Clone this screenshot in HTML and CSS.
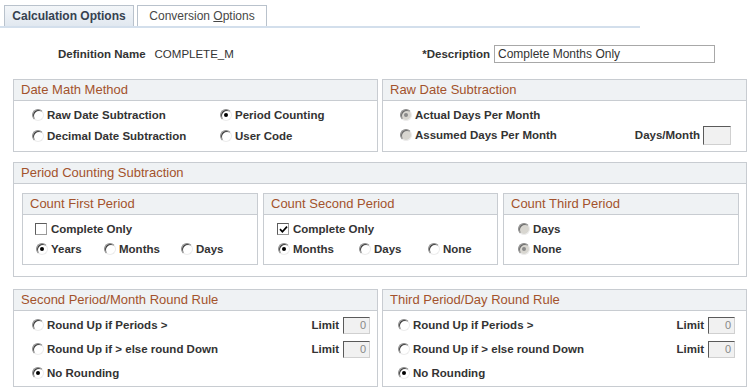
FILE: index.html
```html
<!DOCTYPE html>
<html>
<head>
<meta charset="utf-8">
<link rel="stylesheet" href="styles.css">
</head>
<body>
<div class="tabs">
  <div class="tab active"><span>Calculation Options</span></div>
  <div class="tab"><span>Conversion <u>O</u>ptions</span></div>
</div>

<div class="head-row">
  <span class="lbl">Definition Name</span>
  <span class="val">COMPLETE_M</span>
  <span class="lbl desc-lbl">*Description</span>
  <span class="desc-input">Complete Months Only</span>
</div>

<div class="pair row1">
  <div class="group">
    <div class="ghead">Date Math Method</div>
    <div class="gbody dm">
      <div class="opt"><span class="radio"></span>Raw Date Subtraction</div>
      <div class="opt"><span class="radio on"></span>Period Counting</div>
      <div class="opt"><span class="radio"></span>Decimal Date Subtraction</div>
      <div class="opt"><span class="radio"></span>User Code</div>
    </div>
  </div>
  <div class="group">
    <div class="ghead">Raw Date Subtraction</div>
    <div class="gbody rd">
      <div class="opt"><span class="radio dis on"></span>Actual Days Per Month</div>
      <div class="rd-row">
        <div class="opt"><span class="radio dis"></span>Assumed Days Per Month</div>
        <div class="opt"><span class="lbl">Days/Month</span><span class="num dm-input"></span></div>
      </div>
    </div>
  </div>
</div>

<div class="group pcs">
  <div class="ghead">Period Counting Subtraction</div>
  <div class="pcs-body">
    <div class="group inner">
      <div class="ghead">Count First Period</div>
      <div class="gbody ib ib1">
        <div class="opt"><span class="check"></span>Complete Only</div>
        <div class="line">
          <div class="opt w68"><span class="radio on"></span>Years</div>
          <div class="opt w77"><span class="radio"></span>Months</div>
          <div class="opt"><span class="radio"></span>Days</div>
        </div>
      </div>
    </div>
    <div class="group inner">
      <div class="ghead">Count Second Period</div>
      <div class="gbody ib ib2">
        <div class="opt"><span class="check on"><svg width="9" height="9" viewBox="0 0 9 9"><path d="M1 4.2 L3.4 6.8 L8 1.6" fill="none" stroke="#000" stroke-width="1.7"/></svg></span>Complete Only</div>
        <div class="line">
          <div class="opt w81"><span class="radio on"></span>Months</div>
          <div class="opt w69"><span class="radio"></span>Days</div>
          <div class="opt"><span class="radio"></span>None</div>
        </div>
      </div>
    </div>
    <div class="group inner">
      <div class="ghead">Count Third Period</div>
      <div class="gbody ib ib3">
        <div class="opt"><span class="radio dis"></span>Days</div>
        <div class="opt"><span class="radio dis on"></span>None</div>
      </div>
    </div>
  </div>
</div>

<div class="pair row3">
  <div class="group">
    <div class="ghead">Second Period/Month Round Rule</div>
    <div class="gbody rr rr1">
      <div class="rr-row"><div class="opt"><span class="radio"></span>Round Up if Periods &gt;</div><div class="opt"><span class="lbl">Limit</span><span class="num lim">0</span></div></div>
      <div class="rr-row"><div class="opt"><span class="radio"></span>Round Up if &gt; else round Down</div><div class="opt"><span class="lbl">Limit</span><span class="num lim">0</span></div></div>
      <div class="rr-row"><div class="opt"><span class="radio on"></span>No Rounding</div></div>
    </div>
  </div>
  <div class="group">
    <div class="ghead">Third Period/Day Round Rule</div>
    <div class="gbody rr rr2">
      <div class="rr-row"><div class="opt"><span class="radio"></span>Round Up if Periods &gt;</div><div class="opt"><span class="lbl">Limit</span><span class="num lim">0</span></div></div>
      <div class="rr-row"><div class="opt"><span class="radio"></span>Round Up if &gt; else round Down</div><div class="opt"><span class="lbl">Limit</span><span class="num lim">0</span></div></div>
      <div class="rr-row"><div class="opt"><span class="radio on"></span>No Rounding</div></div>
    </div>
  </div>
</div>
</body>
</html>
```
FILE: styles.css
```css
* { box-sizing: border-box; }
body {
  margin: 0;
  background: #fff;
  font-family: "Liberation Sans", Arial, sans-serif;
  color: #333;
  font-size: 11px;
}
.tabs {
  display: flex;
  gap: 3px;
  padding: 5px 0 0 4px;
  width: 640px;
  border-bottom: 2px solid #d3dfec;
}
.tab {
  width: 130px;
  height: 21px;
  border: 1px solid #b9c2cc;
  border-bottom: none;
  display: flex;
  align-items: center;
  justify-content: center;
  font-size: 12px;
  color: #474747;
  background: #fff;
}
.tab.active {
  background: linear-gradient(#f3f6f9, #e1e8f0);
  font-weight: bold;
  color: #36414f;
  font-size: 12px;
}
.head-row {
  display: flex;
  align-items: center;
  margin-top: 17px;
  padding: 0 39px 0 58px;
  height: 18px;
}
.lbl { font-weight: bold; font-size: 11.5px; color: #333; }
.val { margin-left: 9px; font-size: 11.5px; color: #333; }
.desc-lbl { margin-left: auto; }
.desc-input {
  margin-left: 4px;
  width: 221px;
  height: 18px;
  border: 1px solid #a8a8a8;
  font-size: 12px;
  color: #333;
  padding: 1px 0 0 3px;
  line-height: 15px;
}
.pair {
  display: grid;
  grid-template-columns: 365px 365px;
  gap: 4px;
  margin-left: 13px;
}
.row1 { margin-top: 16px; }
.group {
  border: 1px solid #c8ccd1;
  background: #fff;
}
.ghead {
  height: 21px;
  background: #eff2f4;
  border-bottom: 1px solid #c8ccd1;
  color: #a3522c;
  font-size: 13px;
  line-height: 20px;
  padding-left: 7px;
}
.opt {
  display: flex;
  align-items: center;
  height: 20px;
  font-weight: bold;
  font-size: 11.5px;
  white-space: nowrap;
}
.radio {
  position: relative;
  width: 12px;
  height: 12px;
  border-radius: 50%;
  background: #fff;
  border: 1px solid;
  border-color: #8d8d8d #ececec #ececec #8d8d8d;
  box-shadow: inset 1px 1px 0 #3f3f3f;
  margin-right: 3px;
  flex: none;
}
.radio.on::after {
  content: "";
  position: absolute;
  left: 3px;
  top: 3px;
  width: 4px;
  height: 4px;
  border-radius: 50%;
  background: #000;
}
.radio.dis { background: #d8d6d0; box-shadow: inset 1px 1px 0 #6c6c6c; }
.radio.dis.on::after { background: #8a8a8a; }
.check {
  width: 12px;
  height: 12px;
  border: 1px solid #5c5c5c;
  border-right-color: #9a9a9a;
  border-bottom-color: #9a9a9a;
  background: #fff;
  margin-right: 4px;
  flex: none;
  display: flex;
  align-items: center;
  justify-content: center;
}
.gbody.dm {
  display: grid;
  grid-template-columns: 188px auto;
  padding: 4px 0 5px 18px;
  height: 50px;
}
.gbody.rd {
  padding: 4px 15px 5px 17px;
  height: 50px;
}
.rd-row { display: flex; justify-content: space-between; }
.num {
  display: inline-block;
  border: 1px solid;
  border-color: #5a5a5a #d0d0d0 #d0d0d0 #5a5a5a;
  background: #f1f1f1;
  color: #888;
  font-weight: normal;
  font-size: 11px;
  text-align: right;
}
.dm-input { width: 28px; height: 19px; margin-left: 3px; }
.pcs { margin: 10px 7px 0 13px; }
.pcs-body {
  display: grid;
  grid-template-columns: 236px 235px 236px;
  column-gap: 5px;
  padding: 9px 6px 11px 8px;
}
.inner .ghead { font-size: 13px; }
.gbody.ib { padding: 4px 0 4px 12px; height: 49px; }
.gbody.ib2 { padding-left: 13px; }
.gbody.ib3 { padding-left: 14px; }
.line { display: flex; }
.w68 { width: 68px; }
.w77 { width: 77px; }
.w81 { width: 81px; }
.w69 { width: 69px; }
.ib1 .line, .ib2 .line { padding-left: 1px; }
.row3 { margin-top: 12px; }
.gbody.rr { padding: 2px 7px 0 18px; height: 75px; }
.gbody.rr2 { padding: 2px 11px 0 15px; }
.rr-row { display: flex; justify-content: space-between; align-items: center; height: 24px; }
.lim { width: 27px; height: 17px; margin-left: 4px; padding-right: 3px; line-height: 15px; }
```
